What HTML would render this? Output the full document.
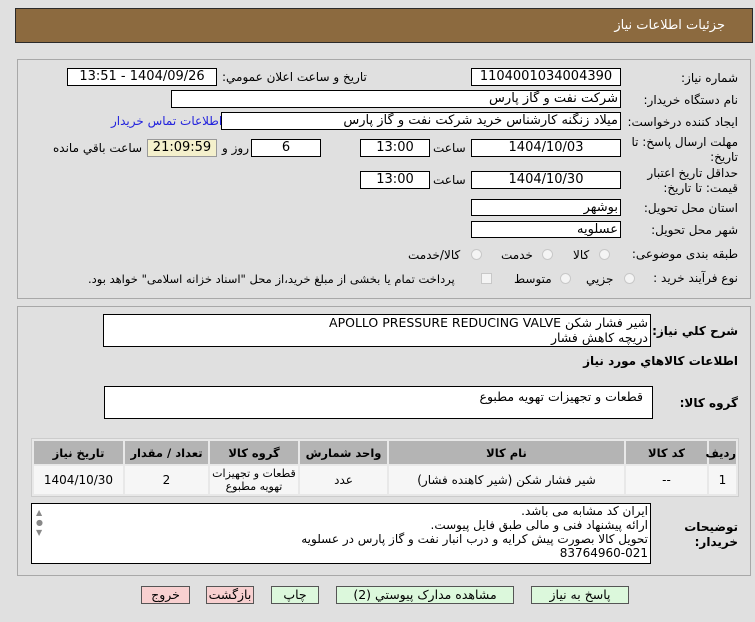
<!DOCTYPE html>
<html><head><meta charset="utf-8"><style>
body{margin:0;width:755px;height:622px;background:#e0e0e0;font-family:"DejaVu Sans","Liberation Sans",sans-serif;font-size:12px;color:#000;position:relative;overflow:hidden}
.a{position:absolute;white-space:nowrap}
.r{direction:rtl;text-align:right}
.box{position:absolute;background:#fff;border:1px solid #000;box-sizing:border-box;direction:rtl;text-align:center;line-height:16px;font-size:13px}
.lab{position:absolute;direction:rtl;white-space:nowrap;font-size:12px}
.pan{position:absolute;border:1px solid #a8a8a8;box-sizing:border-box}
.rad{position:absolute;width:11px;height:11px;border-radius:50%;border:1px solid #c8c8c8;background:#f4f4f4;box-sizing:border-box}
.btn{position:absolute;border:1px solid #555;box-sizing:border-box;text-align:center;line-height:16px;font-size:12.5px;direction:rtl}
.g{background:#dcf8dc}.p{background:#f8d0d0}
table{position:absolute;border-collapse:separate;border-spacing:2px;background:#e8e8e8;border:1px solid #ccc;table-layout:fixed}
td{text-align:center;font-size:12px;background:#f6f6f6;padding:0;height:28px;overflow:hidden}
th{background:#b4b4b4;font-weight:bold;font-size:11.5px;height:23px;padding:0}
</style></head><body>
<div class="a" style="left:15px;top:8px;width:738px;height:35px;background:#8c6a3f;border:1px solid #2a2a2a;box-sizing:border-box"></div>
<div class="a r" style="right:30px;top:18px;color:#fff;font-size:13px">جزئیات اطلاعات نیاز</div>

<div class="pan" style="left:17px;top:59px;width:734px;height:240px"></div>
<div class="lab" style="right:17px;top:71px">شماره نياز:</div>
<div class="box" style="left:471px;top:68px;width:150px;height:18px">1104001034004390</div>
<div class="lab" style="left:222px;top:70px">تاريخ و ساعت اعلان عمومي:</div>
<div class="box" style="left:67px;top:68px;width:150px;height:18px">1404/09/26 - 13:51</div>

<div class="lab" style="right:17px;top:93px">نام دستگاه خريدار:</div>
<div class="box" style="left:171px;top:90px;width:450px;height:18px;text-align:right;padding-right:2px">شرکت نفت و گاز پارس</div>

<div class="lab" style="right:17px;top:115px">ايجاد کننده درخواست:</div>
<div class="box" style="left:221px;top:112px;width:400px;height:18px;text-align:right;padding-right:2px">میلاد زنگنه کارشناس خرید شرکت نفت و گاز پارس</div>
<div class="lab" style="left:111px;top:114px;color:#2222dd">اطلاعات تماس خريدار</div>

<div class="lab" style="right:17px;top:135px">مهلت ارسال پاسخ: تا</div>
<div class="lab" style="right:17px;top:150px">تاريخ:</div>
<div class="box" style="left:471px;top:139px;width:150px;height:18px">1404/10/03</div>
<div class="lab" style="left:433px;top:141px">ساعت</div>
<div class="box" style="left:360px;top:139px;width:70px;height:18px">13:00</div>
<div class="box" style="left:251px;top:139px;width:70px;height:18px">6</div>
<div class="lab" style="left:222px;top:141px">روز و</div>
<div class="box" style="left:147px;top:139px;width:70px;height:18px;background:#f4f0cc;border-color:#999">21:09:59</div>
<div class="lab" style="left:53px;top:141px">ساعت باقي مانده</div>

<div class="lab" style="right:17px;top:166px">حداقل تاريخ اعتبار</div>
<div class="lab" style="right:17px;top:181px">قيمت: تا تاريخ:</div>
<div class="box" style="left:471px;top:171px;width:150px;height:18px">1404/10/30</div>
<div class="lab" style="left:433px;top:173px">ساعت</div>
<div class="box" style="left:360px;top:171px;width:70px;height:18px">13:00</div>

<div class="lab" style="right:17px;top:201px">استان محل تحويل:</div>
<div class="box" style="left:471px;top:199px;width:150px;height:17px;text-align:right;padding-right:2px">بوشهر</div>
<div class="lab" style="right:17px;top:223px">شهر محل تحويل:</div>
<div class="box" style="left:471px;top:221px;width:150px;height:17px;text-align:right;padding-right:2px">عسلويه</div>

<div class="lab" style="right:17px;top:247px">طبقه بندی موضوعی:</div>
<div class="rad" style="left:599px;top:249px"></div><div class="lab" style="left:573px;top:248px">کالا</div>
<div class="rad" style="left:542px;top:249px"></div><div class="lab" style="left:501px;top:248px">خدمت</div>
<div class="rad" style="left:471px;top:249px"></div><div class="lab" style="left:408px;top:248px">کالا/خدمت</div>

<div class="lab" style="right:17px;top:271px">نوع فرآيند خريد :</div>
<div class="rad" style="left:624px;top:273px"></div><div class="lab" style="left:586px;top:272px">جزيي</div>
<div class="rad" style="left:560px;top:273px"></div><div class="lab" style="left:514px;top:272px">متوسط</div>
<div class="a" style="left:481px;top:273px;width:11px;height:11px;border:1px solid #c8c8c8;background:#f4f4f4;box-sizing:border-box"></div>
<div class="lab" style="left:88px;top:272px;font-size:11.5px">پرداخت تمام يا بخشی از مبلغ خريد،از محل "اسناد خزانه اسلامی" خواهد بود.</div>

<div class="pan" style="left:17px;top:306px;width:734px;height:270px"></div>
<div class="lab" style="right:17px;top:324px;font-weight:bold">شرح كلي نياز:</div>
<div class="box" style="left:103px;top:314px;width:548px;height:33px;text-align:right;padding-right:2px;line-height:15px;font-size:12.5px">شير فشار شکن APOLLO PRESSURE REDUCING VALVE<br>دريچه کاهش فشار</div>
<div class="lab" style="right:17px;top:354px;font-weight:bold">اطلاعات كالاهاي مورد نياز</div>
<div class="lab" style="right:17px;top:396px;font-weight:bold">گروه کالا:</div>
<div class="box" style="left:104px;top:386px;width:549px;height:33px;text-align:right;padding-right:9px;line-height:20px;font-size:12.5px">قطعات و تجهيزات تهويه مطبوع</div>

<table style="left:31px;top:438px;width:708px;direction:rtl">
<colgroup><col style="width:27px"><col style="width:81px"><col style="width:235px"><col style="width:87px"><col style="width:88px"><col style="width:83px"><col></colgroup>
<tr><th>رديف</th><th>کد کالا</th><th>نام کالا</th><th>واحد شمارش</th><th>گروه کالا</th><th>تعداد / مقدار</th><th>تاريخ نياز</th></tr>
<tr><td>1</td><td>--</td><td>شير فشار شکن (شير کاهنده فشار)</td><td>عدد</td><td style="line-height:13px;font-size:11px">قطعات و تجهيزات<br>تهويه مطبوع</td><td>2</td><td>1404/10/30</td></tr>
</table>

<div class="lab" style="right:17px;top:520px;font-weight:bold">توضيحات</div>
<div class="lab" style="right:17px;top:535px;font-weight:bold">خريدار:</div>
<div class="box" style="left:31px;top:503px;width:620px;height:61px;text-align:right;padding-right:2px;line-height:14px;font-size:12px">ايران کد مشابه می باشد.<br>ارائه پيشنهاد فنی و مالی طبق فايل پيوست.<br>تحويل کالا بصورت پيش کرايه و درب انبار نفت و گاز پارس در عسلويه<br>83764960-021</div>
<div class="a" style="left:36px;top:508px;color:#888;font-size:8px;line-height:10px">▲<br>●<br>▼</div>

<div class="btn g" style="left:531px;top:586px;width:98px;height:18px">پاسخ به نياز</div>
<div class="btn g" style="left:336px;top:586px;width:178px;height:18px">مشاهده مدارک پيوستي (2)</div>
<div class="btn g" style="left:271px;top:586px;width:48px;height:18px">چاپ</div>
<div class="btn p" style="left:206px;top:586px;width:48px;height:18px">بازگشت</div>
<div class="btn p" style="left:141px;top:586px;width:49px;height:18px">خروج</div>
</body></html>
